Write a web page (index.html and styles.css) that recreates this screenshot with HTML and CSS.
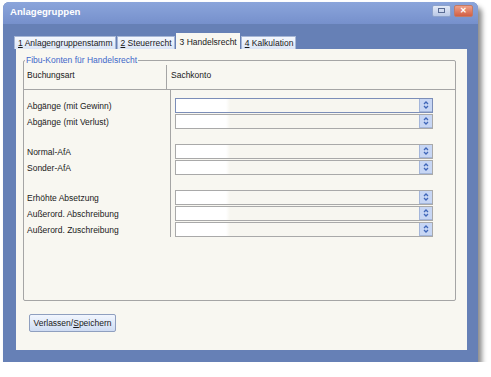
FILE: index.html
```html
<!DOCTYPE html>
<html lang="de">
<head>
    <meta charset="UTF-8">
    <title>Anlagegruppen</title>
    <link rel="stylesheet" href="styles.css">
</head>
<body>
    <div class="fenster">
        <div class="titelleiste">
            <span class="titel">Anlagegruppen</span>
            <span class="knopf wiederherstellen"><span class="kasten"></span></span>
            <span class="knopf schliessen">&#x2715;</span>
        </div>

        <div class="reiter">
            <span class="reiter-tab"><u>1</u> Anlagengruppenstamm</span>
            <span class="reiter-tab"><u>2</u> Steuerrecht</span>
            <span class="reiter-tab aktiv">3 Handelsrecht</span>
            <span class="reiter-tab"><u>4</u> Kalkulation</span>
        </div>

        <div class="seite">
            <fieldset class="gruppe">
                <legend>Fibu-Konten für Handelsrecht</legend>
                <div class="kopf">
                    <div class="spalte-art">Buchungsart</div>
                    <div class="spalte-konto">Sachkonto</div>
                </div>
                <div class="zeilen">
                    <div class="block">
                        <div class="zeile"><div class="spalte-art">Abgänge (mit Gewinn)</div><div class="spalte-konto"><div class="feld fokus"><span class="dreh"></span></div></div></div>
                        <div class="zeile"><div class="spalte-art">Abgänge (mit Verlust)</div><div class="spalte-konto"><div class="feld"><span class="dreh"></span></div></div></div>
                    </div>
                    <div class="block">
                        <div class="zeile"><div class="spalte-art">Normal-AfA</div><div class="spalte-konto"><div class="feld"><span class="dreh"></span></div></div></div>
                        <div class="zeile"><div class="spalte-art">Sonder-AfA</div><div class="spalte-konto"><div class="feld"><span class="dreh"></span></div></div></div>
                    </div>
                    <div class="block">
                        <div class="zeile"><div class="spalte-art">Erhöhte Absetzung</div><div class="spalte-konto"><div class="feld"><span class="dreh"></span></div></div></div>
                        <div class="zeile"><div class="spalte-art">Außerord. Abschreibung</div><div class="spalte-konto"><div class="feld"><span class="dreh"></span></div></div></div>
                        <div class="zeile"><div class="spalte-art">Außerord. Zuschreibung</div><div class="spalte-konto"><div class="feld"><span class="dreh"></span></div></div></div>
                    </div>
                </div>
            </fieldset>

            <button type="button" class="speichern">Verlassen/<u>S</u>peichern</button>
        </div>
    </div>
</body>
</html>
```

FILE: styles.css
```css
body {
    margin: 0;
    padding: 2px 0 0 3px;
    background-color: white;
    font-family: "Liberation Sans", Arial, sans-serif;
    font-size: 8.5px;
    color: #1a1a1a;
}

.fenster {
    width: 475px;
    height: 360px;
    background-color: #6680b6;
    border-radius: 6px 6px 0 0;
    box-shadow: 4px 5px 5px rgba(0,0,0,0.45);
    display: flex;
    flex-direction: column;
}

.titelleiste {
    height: 22px;
    display: flex;
    align-items: center;
    gap: 3px;
    padding: 0 5px 0 7px;
    background: linear-gradient(#8ba5db, #7690cc);
    border-radius: 6px 6px 0 0;
}

.titel {
    flex: 1;
    color: white;
    font-weight: bold;
    font-size: 9.6px;
    margin-top: -3px;
}

.knopf {
    width: 17px;
    height: 10px;
    margin-top: -5px;
    border: 1px solid #8ea3cc;
    border-radius: 2px;
    display: flex;
    align-items: center;
    justify-content: center;
}

.wiederherstellen {
    background: linear-gradient(#e4eaf7, #b9c8e6);
}

.kasten {
    width: 5px;
    height: 3px;
    border: 1px solid #5a6c94;
}

.schliessen {
    background: linear-gradient(#efa088, #d25f44);
    border-color: #c27a66;
    color: white;
    font-size: 8px;
    font-weight: bold;
    line-height: 1;
}

.reiter {
    display: flex;
    align-items: flex-end;
    margin: 10px 0 0 11px;
    height: 15px;
}

.reiter-tab {
    height: 12px;
    padding: 0 2px 0 3px;
    margin-right: 1px;
    background: linear-gradient(#f5f8fe, #dbe5f6);
    border: 1px solid #a7b7d6;
    border-bottom: none;
    line-height: 12px;
    white-space: nowrap;
}

.reiter-tab.aktiv {
    height: 15px;
    line-height: 16px;
    background: #f8f7f1;
    border-color: #f8f7f1;
}

.seite {
    margin: 0 11px 0 13px;
    height: 301px;
    background-color: #f8f7f1;
    padding: 0 0 0 7px;
    display: flex;
    flex-direction: column;
}

.gruppe {
    margin: 7px 0 0 0;
    padding: 0;
    width: 433px;
    height: 245px;
    box-sizing: border-box;
    border: 1px solid #a5a5a5;
    border-radius: 2px;
    display: flex;
    flex-direction: column;
}

.gruppe legend {
    margin-left: 1px;
    padding: 0 1px;
    color: #3d67c9;
    line-height: 9px;
}

.kopf {
    display: flex;
    height: 24px;
    border-bottom: 1px solid #a5a5a5;
}

.kopf .spalte-art,
.kopf .spalte-konto {
    height: 24px;
    padding-top: 5px;
    box-sizing: border-box;
}

.spalte-art {
    width: 143px;
    padding-left: 3px;
    border-right: 1px solid #a5a5a5;
    white-space: nowrap;
}

.spalte-konto {
    padding-left: 4px;
}

.zeilen {
    flex: 1;
    display: flex;
    flex-direction: column;
    background: linear-gradient(to right, transparent 146px, #a5a5a5 146px, #a5a5a5 147px, transparent 147px);
    padding-top: 8px;
    gap: 15px;
}

.block {
    display: flex;
    flex-direction: column;
    gap: 1px;
}

.zeile {
    display: flex;
    align-items: center;
    height: 15px;
}

.zeile .spalte-art {
    border-right: none;
    margin-right: 1px;
}

.feld {
    width: 256px;
    height: 13px;
    border: 1px solid #a9a9a9;
    background: linear-gradient(to right, #ffffff 50px, #f7f6f0 54px);
    display: flex;
    justify-content: flex-end;
}

.feld.fokus {
    border-color: #7c8eb8;
}

.dreh {
    width: 12px;
    height: 12px;
    border: 1px solid #a4b6da;
    border-top: none;
    border-right: none;
    background-color: #c7d6f4;
    background-image: url("data:image/svg+xml;utf8,<svg xmlns='http://www.w3.org/2000/svg' width='12' height='12'><path d='M4 5 L6 3 L8 5 M4 7 L6 9 L8 7' fill='none' stroke='%233f66b8' stroke-width='1.3'/></svg>");
    background-repeat: no-repeat;
}

.speichern {
    margin: 13px 0 0 6px;
    width: 87px;
    height: 18px;
    padding: 0;
    font-family: inherit;
    font-size: 8.5px;
    color: #1a1a1a;
    background: linear-gradient(#f2f6fe, #cfdcf3);
    border: 1px solid #8f9fbf;
    border-radius: 2px;
}
```
